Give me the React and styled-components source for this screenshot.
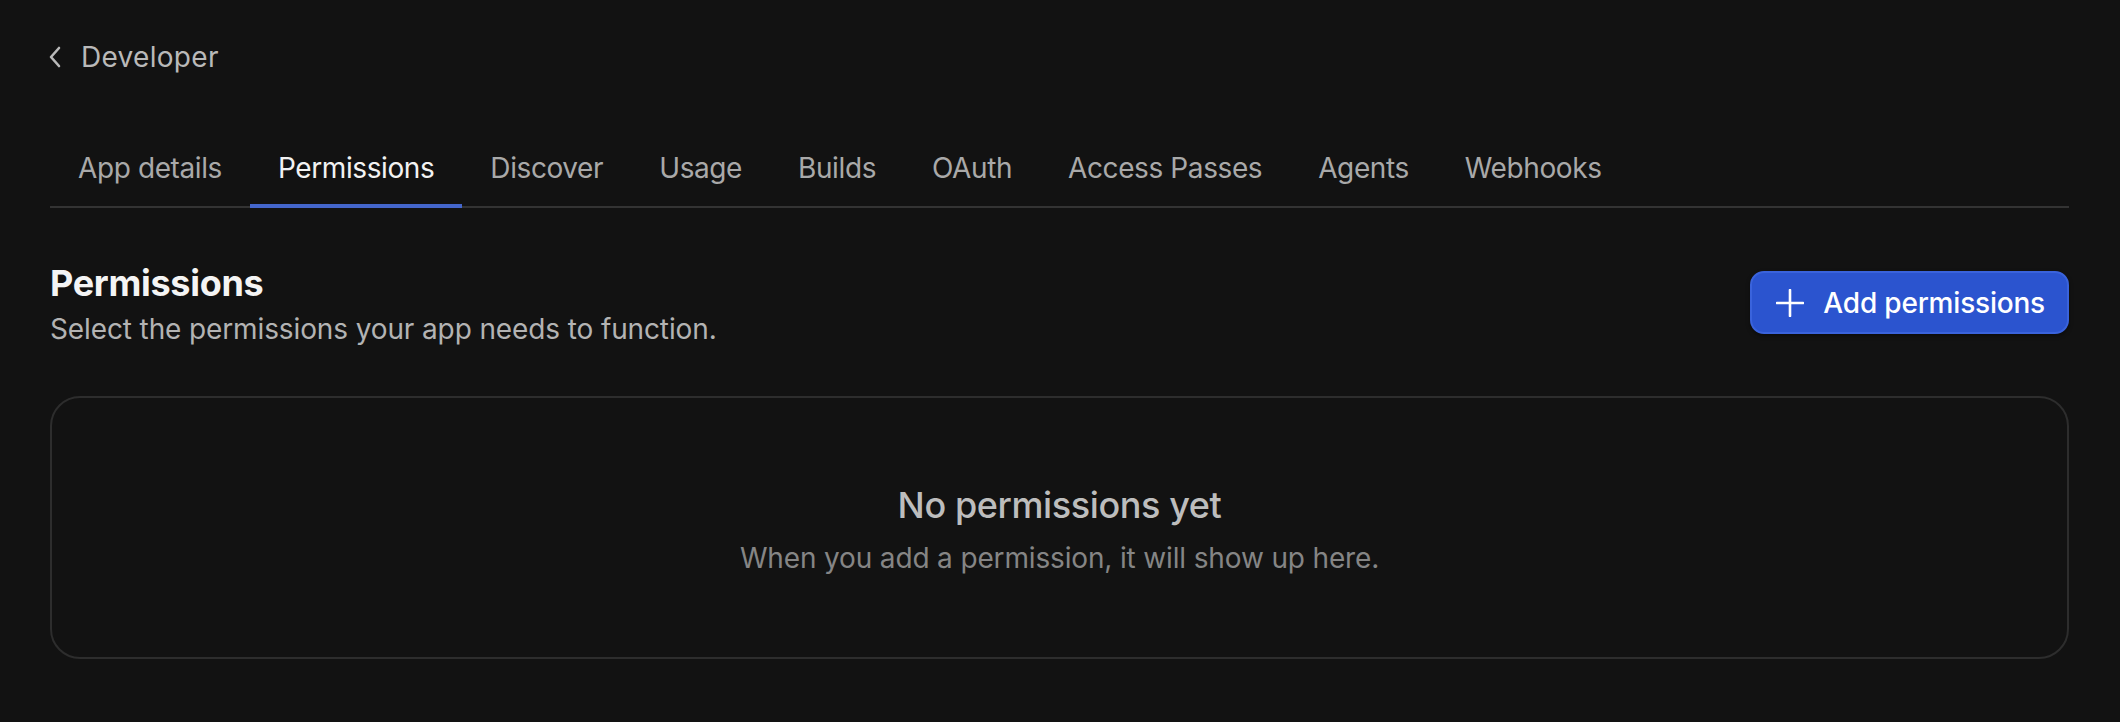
import React from "react";
import styled, { createGlobalStyle } from "styled-components";

const Global = createGlobalStyle`
  html, body { margin: 0; padding: 0; background: #121212; }
  body { font-family: Inter, "Noto Sans", "Liberation Sans", sans-serif; -webkit-font-smoothing: antialiased; }
  * { box-sizing: border-box; }
`;

const Page = styled.div`
  min-height: 722px;
  background: #121212;
  padding: 37px 51px 0 50px;
  display: flex;
  flex-direction: column;
`;

const BackLink = styled.a`
  display: flex;
  align-items: center;
  gap: 18px;
  height: 40px;
  color: #b9b9b9;
  font-size: 28px;
  line-height: 40px;
  text-decoration: none;
  letter-spacing: 0.3px;
  svg { margin-left: -3px; }
`;

const TabBar = styled.nav`
  display: flex;
  margin-top: 74px;
  border-bottom: 2px solid #333333;
`;

const Tab = styled.button`
  background: none;
  border: none;
  padding: 0 28px 19px;
  margin-bottom: -2px;
  font-family: inherit;
  font-size: 28px;
  line-height: 34px;
  letter-spacing: -0.4px;
  color: ${(p) => (p.$active ? "#f2f2f2" : "#a9a9a9")};
  border-bottom: 4px solid ${(p) => (p.$active ? "#4466cc" : "transparent")};
  cursor: pointer;
`;

const HeaderRow = styled.div`
  display: flex;
  justify-content: space-between;
  align-items: flex-start;
  margin-top: 53px;
`;

const TitleBlock = styled.div`
  display: flex;
  flex-direction: column;
`;

const Title = styled.h1`
  margin: 0;
  font-size: 36px;
  line-height: 44px;
  font-weight: 700;
  color: #f4f4f4;
  letter-spacing: -0.3px;
`;

const Subtitle = styled.p`
  margin: 6px 0 0;
  font-size: 28px;
  line-height: 36px;
  color: #b3b3b3;
  letter-spacing: -0.12px;
`;

const PrimaryButton = styled.button`
  margin-top: 10px;
  height: 63px;
  padding: 0 22px 0 24px;
  display: flex;
  align-items: center;
  gap: 19px;
  background: #2b54cf;
  border: 2px solid #3a63dc;
  border-radius: 14px;
  color: #ffffff;
  font-family: inherit;
  font-size: 28px;
  font-weight: 500;
  letter-spacing: -0.2px;
  box-shadow: 0 2px 4px rgba(0,0,0,0.4);
  cursor: pointer;
`;

const EmptyCard = styled.section`
  margin-top: 49px;
  border: 2px solid #2d2d2d;
  border-radius: 30px;
  padding: 85px 20px 81px;
  display: flex;
  flex-direction: column;
  align-items: center;
`;

const EmptyTitle = styled.h2`
  margin: 0;
  font-size: 36px;
  line-height: 44px;
  font-weight: 500;
  color: #bdbdbd;
  letter-spacing: -0.4px;
`;

const EmptyText = styled.p`
  margin: 13px 0 0;
  font-size: 28px;
  line-height: 36px;
  color: #858585;
  letter-spacing: -0.15px;
`;

const tabs = ["App details", "Permissions", "Discover", "Usage", "Builds", "OAuth", "Access Passes", "Agents", "Webhooks"];

export default function App() {
  return (
    <>
      <Global />
      <Page>
        <BackLink href="#">
          <svg width="16" height="24" viewBox="0 0 16 24" fill="none">
            <path d="M12 3 L4 12 L12 21" stroke="#b9b9b9" strokeWidth="2.6" strokeLinecap="round" strokeLinejoin="round" />
          </svg>
          Developer
        </BackLink>
        <TabBar>
          {tabs.map((t) => (
            <Tab key={t} $active={t === "Permissions"}>{t}</Tab>
          ))}
        </TabBar>
        <HeaderRow>
          <TitleBlock>
            <Title>Permissions</Title>
            <Subtitle>Select the permissions your app needs to function.</Subtitle>
          </TitleBlock>
          <PrimaryButton>
            <svg width="28" height="28" viewBox="0 0 28 28" fill="none">
              <path d="M14 1 V27 M1 14 H27" stroke="#ffffff" strokeWidth="2.6" strokeLinecap="round" />
            </svg>
            Add permissions
          </PrimaryButton>
        </HeaderRow>
        <EmptyCard>
          <EmptyTitle>No permissions yet</EmptyTitle>
          <EmptyText>When you add a permission, it will show up here.</EmptyText>
        </EmptyCard>
      </Page>
    </>
  );
}
